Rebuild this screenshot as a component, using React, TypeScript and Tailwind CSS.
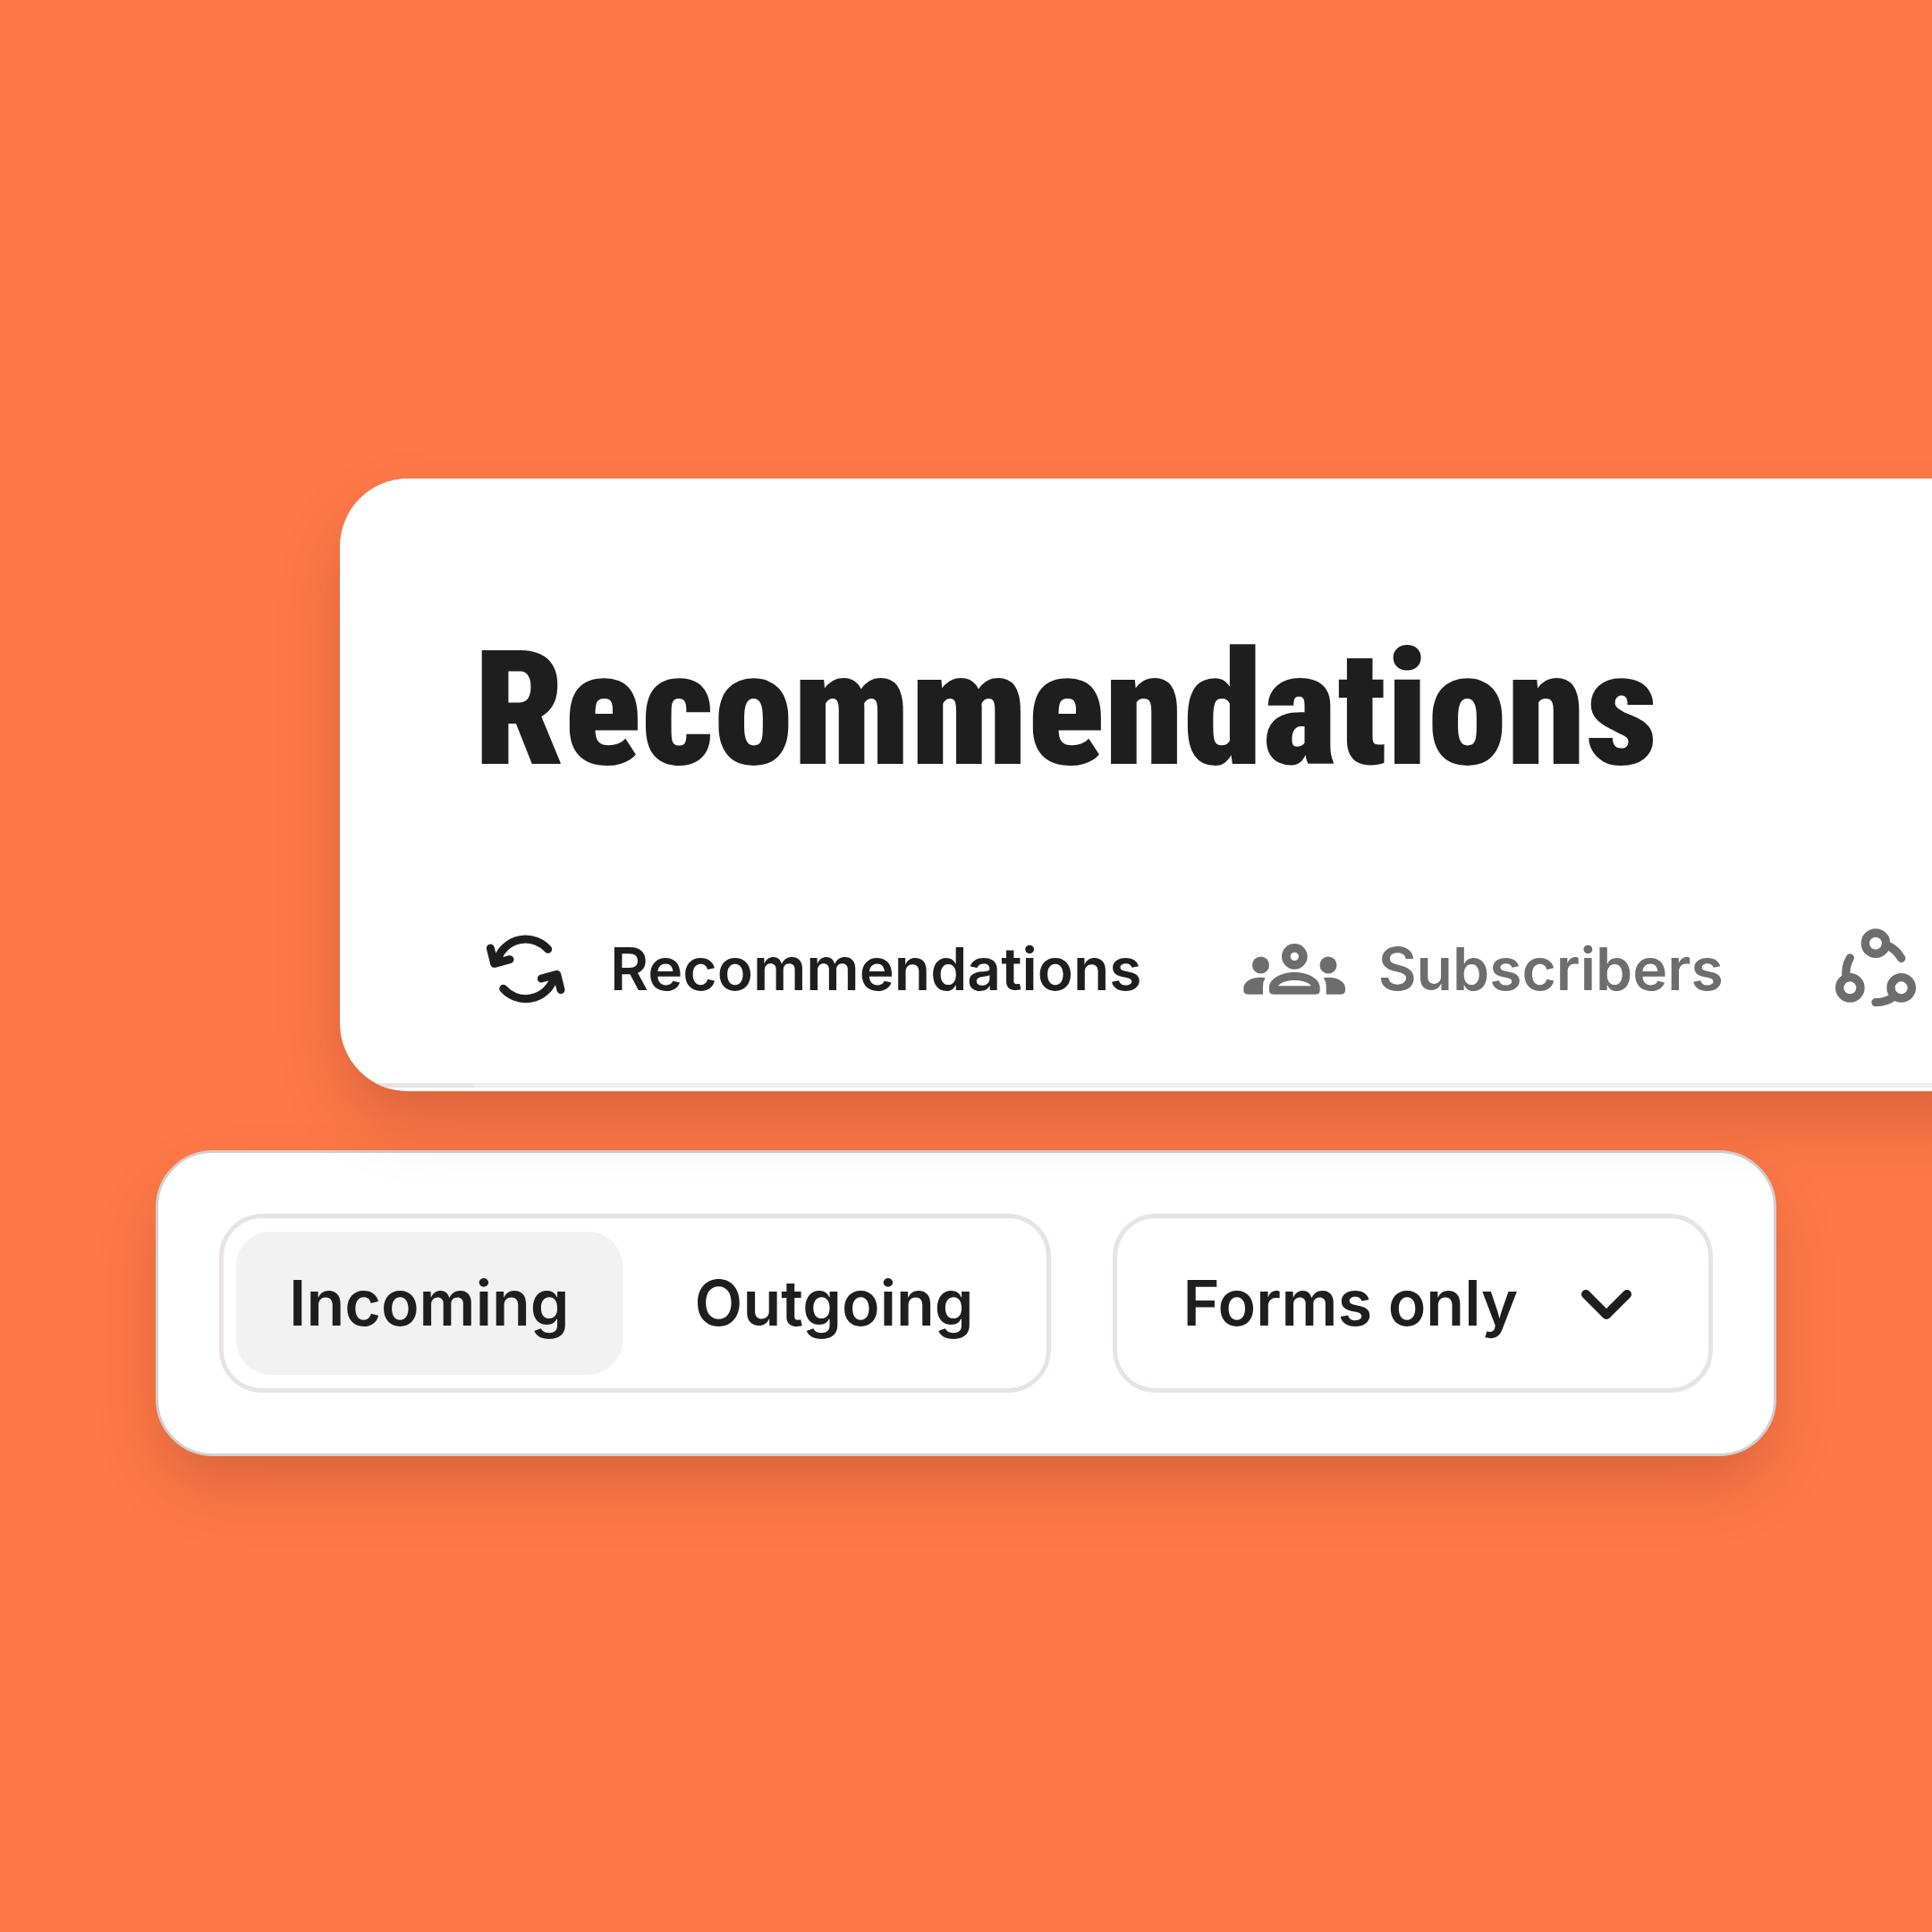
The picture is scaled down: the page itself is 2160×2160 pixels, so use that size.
import { useState } from "react";

function SwapIcon() {
  return (
    <svg
      viewBox="36 22 336 336"
      className="size-28 shrink-0"
      fill="none"
      stroke="currentColor"
      strokeWidth="27"
      strokeLinecap="round"
      strokeLinejoin="round"
      aria-hidden="true"
    >
      <path d="M278 125A100 100 0 0 0 109 157" />
      <path d="M85 121L98 173L150 159" />
      <path d="M128 257A100 100 0 0 0 297 225" />
      <path d="M321 261L308 209L256 223" />
    </svg>
  );
}

function GroupIcon() {
  return (
    <svg viewBox="63 -9 336 336" className="size-28 shrink-0 overflow-visible" fill="currentColor" aria-hidden="true">
      <circle cx="232" cy="118" r="28.5" fill="none" stroke="currentColor" strokeWidth="29" />
      <circle cx="118.500" cy="147" r="28.500" />
      <circle cx="345" cy="147" r="28.500" />
      <path
        fillRule="evenodd"
        d="M160 245Q147 245 147 232V222C147 192 188 171 232 171S317 192 317 222V232Q317 245 304 245ZM177 217H288C281 206 259 198 232 198S184 206 177 217Z"
      />
      <path d="M75 245Q61 245 61 231V224C61 202 88 188 118 188Q127 188 134 190Q126 202 126 217V245Z" />
      <path d="M388 245Q402 245 402 231V224C402 202 375 188 345 188Q336 188 329 190Q338 202 338 217V245Z" />
    </svg>
  );
}

function NetworkIcon() {
  return (
    <svg
      viewBox="63 53 336 336"
      className="size-28 shrink-0"
      fill="none"
      stroke="currentColor"
      strokeWidth="28"
      strokeLinecap="round"
      aria-hidden="true"
    >
      <circle cx="231" cy="136" r="35" />
      <circle cx="317" cy="285" r="35" />
      <circle cx="145" cy="285" r="35" />
      <path d="M265 141A100 100 0 0 1 317 186" />
      <path d="M295 312A100 100 0 0 1 231 334" />
      <path d="M133 252A100 100 0 0 1 145 185" />
    </svg>
  );
}

const tabs = [
  { id: "recommendations", label: "Recommendations", Icon: SwapIcon },
  { id: "subscribers", label: "Subscribers", Icon: GroupIcon },
  { id: "network", label: "", Icon: NetworkIcon },
];

const directions = ["Incoming", "Outgoing"];

export default function App() {
  const [tab, setTab] = useState("recommendations");
  const [direction, setDirection] = useState("Incoming");

  return (
    <main className="flex min-h-screen flex-col justify-center gap-[66px] overflow-hidden bg-[#ff7847] pt-[3px] font-['Inter',sans-serif] font-semibold text-[#1e1e1e]">
      <section className="relative z-10 -mr-24 ml-[380px] overflow-hidden rounded-l-[76px] bg-white pt-[158px] pb-1 shadow-[0_36px_80px_-8px_rgba(0,0,0,0.18)]">
        <h1 className="ml-[150px] font-['Roboto_Condensed','Liberation_Sans',sans-serif] text-[178px] leading-[200px] font-black whitespace-nowrap">
          Recommendations
        </h1>
        <nav className="mt-[134px] mb-[72px] ml-[152px] flex gap-[114px]">
          {tabs.map(({ id, label, Icon }) => (
            <button
              key={id}
              type="button"
              aria-label={label || "Network"}
              aria-current={tab === id ? "page" : undefined}
              onClick={() => setTab(id)}
              className={`flex shrink-0 items-center gap-[38px] text-[66px] leading-[80px] whitespace-nowrap ${
                tab === id ? "text-[#1e1e1e]" : "text-[#6d6d6d]"
              }`}
            >
              <Icon />
              {label && <span>{label}</span>}
            </button>
          ))}
        </nav>
        <div className="flex h-[5px]">
          <div className="w-[150px] bg-[#e5e4e2]" />
          <div className="flex-1 bg-[#efeeec]" />
        </div>
      </section>

      <section className="ml-[174px] flex w-fit gap-[69px] rounded-[64px] border-3 border-[#d0d0d0] bg-white p-[68px] text-[70px] leading-[80px] shadow-[0_36px_76px_-8px_rgba(0,0,0,0.17)]">
        <div className="flex gap-[22px] rounded-[48px] border-5 border-[#e6e3e2] py-[15px] pr-[22px] pl-3.5">
          {directions.map((name) => (
            <button
              key={name}
              type="button"
              aria-pressed={direction === name}
              onClick={() => setDirection(name)}
              className={`h-40 rounded-[38px] px-[59px] ${direction === name ? "bg-[#f2f2f2]" : ""}`}
            >
              {name}
            </button>
          ))}
        </div>
        <div className="grid items-center rounded-[48px] border-5 border-[#e6e3e2]">
          <select
            aria-label="Filter"
            className="col-start-1 row-start-1 h-full appearance-none rounded-[43px] bg-transparent pr-[212px] pl-[74px]"
          >
            <option>Forms only</option>
          </select>
          <svg
            viewBox="0 0 56 34"
            className="pointer-events-none col-start-1 row-start-1 mt-1 mr-[86px] h-[34px] w-14 justify-self-end"
            fill="none"
            stroke="currentColor"
            strokeWidth="10"
            strokeLinecap="round"
            strokeLinejoin="round"
            aria-hidden="true"
          >
            <path d="M5 5L28 28L51 5" />
          </svg>
        </div>
      </section>
    </main>
  );
}
